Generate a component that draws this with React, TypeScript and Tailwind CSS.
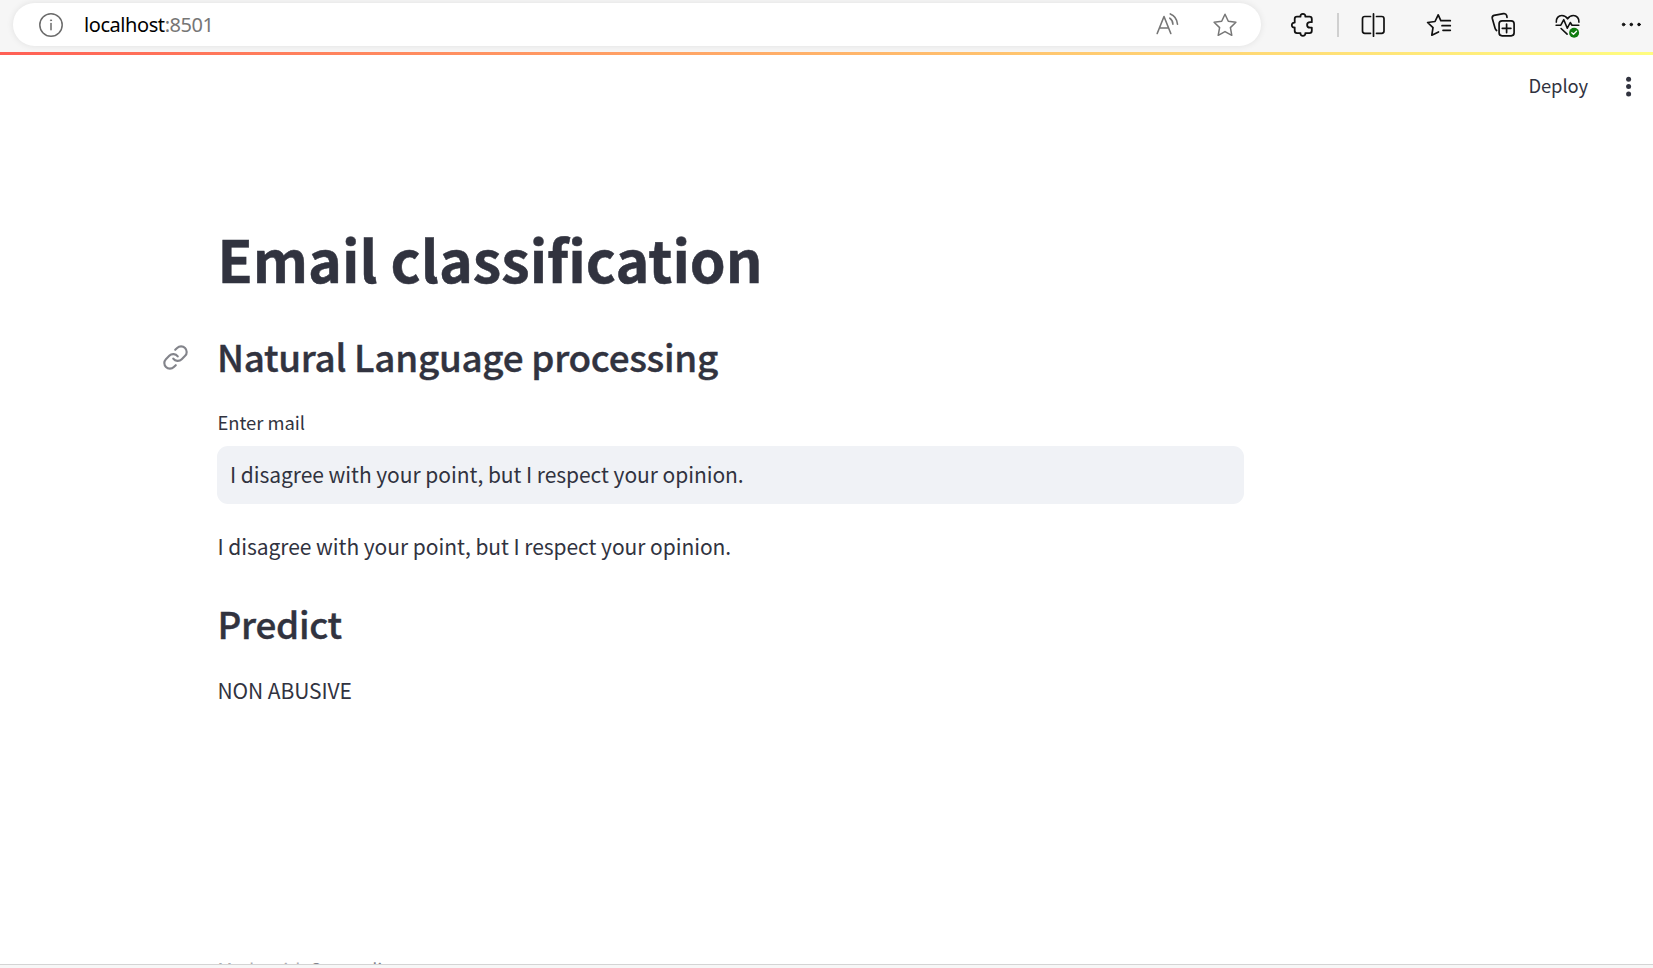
import type { ReactNode } from "react";

type IconProps = { box: string; className: string; width?: number; children: ReactNode };

function Icon({ box, className, width = 1.5, children }: IconProps) {
  return (
    <svg
      viewBox={box}
      className={className}
      fill="none"
      stroke="currentColor"
      strokeWidth={width}
      strokeLinecap="round"
      strokeLinejoin="round"
    >
      {children}
    </svg>
  );
}

function AddressBar() {
  return (
    <div className="ml-[13px] mt-[3px] flex h-[43px] w-[1248px] shrink-0 items-center rounded-full bg-white pl-[24px] pr-[22px] shadow-[0_0_7px_rgba(0,0,0,0.09)]">
      <Icon box="0 0 28 28" className="h-7 w-7 shrink-0 text-[#6b6b6b]" width={1.5}>
        <circle cx="14" cy="14" r="11.2" />
        <path d="M14 12.5v6.3" />
        <circle cx="14" cy="9.3" r="0.6" fill="currentColor" strokeWidth={0.8} />
      </Icon>
      <div className="ml-[19px] whitespace-nowrap font-['Noto_Sans','Open_Sans',sans-serif] text-[20px] leading-[28px] tracking-[-0.43px] text-black">
        localhost<span className="text-[#767676]">:8501</span>
      </div>
      <Icon box="0 0 28 28" className="ml-auto h-7 w-7 text-[#767676]" width={1.6}>
        <path d="M4.200 22.500 11 5.500 17.800 22.500M6.500 17h9" />
        <path d="M16.800 7.200c2 1.200 3 3.300 3.100 6" />
        <path d="M17.300 2.900c4 1.600 6.800 5.300 7.200 10.300" />
      </Icon>
      <Icon box="0 0 28 28" className="ml-[30px] h-7 w-7 text-[#767676]" width={1.5}>
        <path d="M14 3.3l3.3 7 7.6 1-5.5 5.3 1.4 7.7L14 20.6l-6.8 3.7 1.4-7.7-5.5-5.3 7.6-1z" />
      </Icon>
    </div>
  );
}

function BrowserBar() {
  return (
    <div className="flex h-[52px] bg-[#f6f6f6] text-[#111]">
      <AddressBar />
      <div className="flex h-[50px] items-center">
        <Icon box="0 0 28 28" className="ml-[27px] h-7 w-7" width={1.800}>
          <path d="M9 5.700h3.500c-.3-1.700.9-2.800 2.400-2.800s2.700 1.100 2.400 2.800h4.200q2.300 0 2.300 2.300v3.200h-1.700c-1.900 0-3 1.200-3 2.700s1.100 2.700 3 2.700h1.700v3.200q0 2.300-2.300 2.300h-4.200c.3 1.700-.9 2.800-2.400 2.800s-2.700-1.100-2.400-2.800H9q-2.300 0-2.300-2.300v-3.300c-1.700.3-2.900-.9-2.900-2.400s1.200-2.700 2.900-2.400V8q0-2.300 2.300-2.300z" />
        </Icon>
        <div className="ml-[21px] h-6 w-[2px] bg-[#d0d0d0]" />
        <Icon box="0 0 28 28" className="ml-[20px] h-7 w-7" width={1.7}>
          <path d="M11.500 5.500H5.800q-2.300 0-2.300 2.300v12.200q0 2.300 2.300 2.300h5.700M17.500 5.500h5.200q2.300 0 2.300 2.300v12.200q0 2.300-2.300 2.300h-5.200M14.500 2.800v22.400" />
        </Icon>
        <Icon box="0 0 28 28" className="ml-[38px] h-7 w-7" width={1.7}>
          <path d="M18 9.700h-2.200L13.200 3.800 10 10.500 2.600 11.500 8 16.700 6.800 24.200 13.500 20.900M17.500 9.700h7.800M17 14.700h8.300M18 19.300h7.300" />
        </Icon>
        <Icon box="0 0 28 28" className="ml-[37px] h-7 w-7" width={1.7}>
          <path d="M6.600 19.500Q5.500 18.700 5 17L2.300 7.500Q1.800 5 4 4.400L13.500 2.600Q16 2.200 16.700 4.600L17 6.300" />
          <rect x="9.100" y="9.800" width="15" height="15" rx="3" />
          <path d="M16.600 13v8.600M12.300 17.300h8.600" />
        </Icon>
        <Icon box="0 0 28 28" className="ml-[36px] h-7 w-7" width={1.6}>
          <path d="M2.300 11.200C1.800 7.300 4.600 4.500 7.800 4.500c2.500 0 4.500 1.200 5.800 3.300 1.300-2.100 3.300-3.300 5.800-3.300 3.200 0 6 2.800 5.500 6.700" />
          <path d="M2.100 14.200h4.700l3-5.500 3.500 8.500 3-5.700 1.700 2.700h6.800M7.100 17.500l6 5.700" />
          <circle cx="20.100" cy="21.700" r="5" fill="#0f7b0f" stroke="none" />
          <path d="M17.800 21.800l1.700 1.500 3-3" stroke="white" strokeWidth={1.300} />
        </Icon>
        <Icon box="0 0 28 28" className="ml-[36px] h-7 w-7" width={1}>
          <circle cx="5.600" cy="13.500" r="1.300" fill="currentColor" />
          <circle cx="13.300" cy="13.500" r="1.300" fill="currentColor" />
          <circle cx="21" cy="13.500" r="1.300" fill="currentColor" />
        </Icon>
      </div>
    </div>
  );
}

export default function App() {
  return (
    <div className="flex h-[968px] w-[1653px] flex-col overflow-hidden bg-white font-['Noto_Sans_CJK_SC','Source_Sans_Pro',sans-serif] text-[#31333f]">
      <BrowserBar />
      <div className="h-[3px] shrink-0 bg-linear-to-r from-[#ff5f55] to-[#fffd80]" />
      <header className="flex h-[62px] shrink-0 items-center justify-end pr-[10px]">
        <button className="mb-[2px] whitespace-nowrap text-[18.400px] leading-[28px] tracking-[-0.1px]">Deploy</button>
        <svg viewBox="0 0 28 28" className="ml-[27px] h-7 w-7 fill-current">
          <circle cx="13.600" cy="7.200" r="2.500" />
          <circle cx="13.600" cy="14.600" r="2.500" />
          <circle cx="13.600" cy="21.900" r="2.500" />
        </svg>
      </header>
      <main className="flex h-[847px] w-[1245px] shrink-0 flex-col overflow-hidden pl-[217.500px] pt-[101px]">
        <h1 className="h-[80px] whitespace-nowrap text-[57.400px] font-bold leading-[80px] [-webkit-text-stroke:0.5px_#31333f]">Email classification</h1>
        <div className="-ml-[55.500px] mt-[28px] flex h-[60px] items-center">
          <Icon box="0 0 24 24" className="mr-[28px] mt-[2px] h-[27px] w-[27px] text-[#83848b]" width={1.900}>
            <path d="M10 13a5 5 0 0 0 7.540.54l3-3a5 5 0 0 0-7.070-7.070l-1.720 1.710" />
            <path d="M14 11a5 5 0 0 0-7.540-.54l-3 3a5 5 0 0 0 7.070 7.070l1.710-1.710" />
          </Icon>
          <h2 className="whitespace-nowrap text-[36.800px] font-medium leading-[60px] tracking-[-0.28px] [-webkit-text-stroke:0.4px_#31333f]">Natural Language processing</h2>
        </div>
        <label className="mt-[22px] h-[28px] text-[18.400px] leading-[28px] tracking-[-0.04px]">Enter mail</label>
        <div className="-ml-[0.5px] mt-[10px] flex h-[58px] w-[1027px] shrink-0 items-center rounded-[11px] bg-[#f0f2f6] pb-[2px] pl-[13px] text-[21px] leading-[32px] tracking-[-0.045px]">
          I disagree with your point, but I respect your opinion.
        </div>
        <p className="mt-[26px] h-[32px] text-[21px] leading-[32px] tracking-[-0.045px]">
          I disagree with your point, but I respect your opinion.
        </p>
        <h2 className="mt-[31px] h-[60px] text-[36.800px] font-medium leading-[60px] tracking-[-0.28px] [-webkit-text-stroke:0.4px_#31333f]">Predict</h2>
        <p className="mt-[21px] h-[32px] text-[21px] leading-[32px] tracking-[-0.08px]">NON ABUSIVE</p>
        <footer className="mt-[249px] h-[28px] shrink-0 text-[18.400px] leading-[28px] text-[#adadb2]">
          Made with <span className="text-[#83848b]">Streamlit</span>
        </footer>
      </main>
      <div className="h-[4px] shrink-0 border-t border-[#d4d4d4] bg-[#f7f7f7]" />
    </div>
  );
}
